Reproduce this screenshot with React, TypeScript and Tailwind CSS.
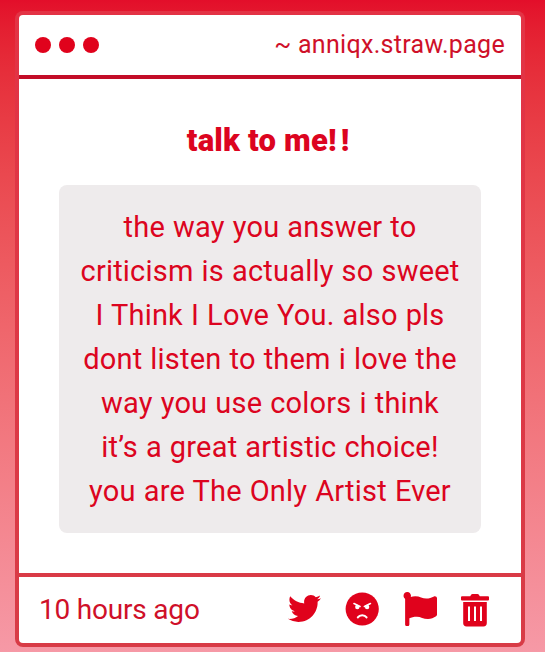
import { FaFlag, FaTwitter } from "react-icons/fa";

const MESSAGE_LINES = [
  "the way you answer to",
  "criticism is actually so sweet",
  "I Think I Love You. also pls",
  "dont listen to them i love the",
  "way you use colors i think",
  "it’s a great artistic choice!",
  "you are The Only Artist Ever",
];

function AngryIcon() {
  return (
    <svg viewBox="0 0 34 34" className="h-[34px] w-[34px]">
      <circle cx="17.2" cy="17" r="16.6" fill="currentColor" />
      <path
        d="M9 11.6l6 2.8M25.4 11.6l-6 2.8"
        stroke="white"
        strokeWidth="1.7"
        strokeLinecap="round"
      />
      <circle cx="12.3" cy="15" r="2.2" fill="white" />
      <circle cx="22.1" cy="15" r="2.2" fill="white" />
      <path
        d="M12.8 25.4c2-3 6.800-3 8.800 0"
        fill="none"
        stroke="white"
        strokeWidth="2"
        strokeLinecap="round"
      />
    </svg>
  );
}

function TrashIcon() {
  return (
    <svg viewBox="0 0 28 33" className="mt-[3px] h-[33px] w-7">
      <path
        d="M1 2.3h8.2L10.3.6Q10.7 0 11.5 0h5q.8 0 1.2.6l1.1 1.7H27q1 0 1 1V5.5q0 .9-1 .9H1q-1 0-1-.9V3.3q0-1 1-1z"
        fill="currentColor"
      />
      <path
        d="M2.200 8h23.600V29q0 3.400-3.400 3.400H5.600Q2.200 32.400 2.200 29z"
        fill="currentColor"
      />
      <path d="M8 12.500v14.500M14 12.500v14.500M20 12.500v14.500" stroke="white" strokeWidth="2" />
    </svg>
  );
}

export default function App() {
  return (
    <main className="h-[652px] w-[545px] overflow-hidden bg-linear-to-b from-[#e30e2a] to-[#f699a6] pt-[11px] pl-[15px] font-['Roboto',sans-serif] text-[#dc0420]">
      <section className="flex h-[636px] w-[510px] flex-col overflow-hidden rounded-lg bg-linear-to-b from-[#e33345] to-[#d83b46] p-1">
        <header className="flex h-[60px] shrink-0 items-center justify-between rounded-t-[4px] bg-white px-4">
          <div className="flex gap-2">
            <span className="size-4 rounded-full bg-[#e0021c]" />
            <span className="size-4 rounded-full bg-[#e0021c]" />
            <span className="size-4 rounded-full bg-[#e0021c]" />
          </div>
          <p className="text-[25px] tracking-[0.3px] text-[#cf1029]">
            ~ anniqx.straw.page
          </p>
        </header>
        <div className="h-1 shrink-0 bg-[#c30d27]" />
        <div className="flex flex-1 flex-col items-center bg-white pt-10">
          <h1 className="text-[31px] leading-[44px] font-black tracking-[0.2px]">
            talk to me<span className="tracking-[4px]">!!</span>
          </h1>
          <div className="mt-[22px] h-[348px] w-[422px] rounded-lg bg-[#eeebec] pt-5 text-center text-[29px] leading-[44px] tracking-[0.2px] [word-spacing:0.6px]">
            {MESSAGE_LINES.map((line) => (
              <p key={line} className="whitespace-nowrap">
                {line}
              </p>
            ))}
          </div>
        </div>
        <footer className="mt-1 flex h-[66px] shrink-0 items-center justify-between rounded-b-[4px] bg-white pr-8 pl-5">
          <p className="text-[28px] tracking-[-0.2px] text-[#cf1029]">
            10 hours ago
          </p>
          <div className="flex items-center gap-6 pb-[3px] text-[#e0021c]">
            <FaTwitter className="size-[33px]" />
            <AngryIcon />
            <FaFlag className="size-[34px]" />
            <TrashIcon />
          </div>
        </footer>
      </section>
    </main>
  );
}
